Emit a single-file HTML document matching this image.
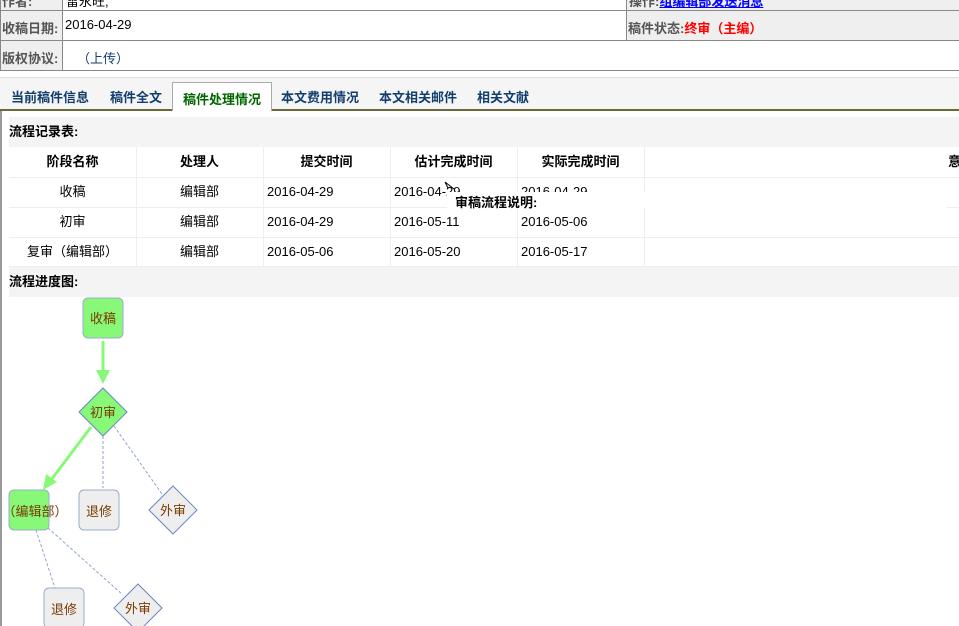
<!DOCTYPE html>
<html><head><meta charset="utf-8"><style>
*{margin:0;padding:0;box-sizing:border-box}
body{width:959px;height:626px;overflow:hidden;background:#fff;font-family:"Liberation Sans","Noto Sans CJK SC",sans-serif;font-size:13px;position:relative}
.a{position:absolute}
.lab{background:#efefef;color:#555;font-weight:bold}
.hl{position:absolute;height:1px;background:#888}
.vl{position:absolute;width:1px;background:#888}
.tab{position:absolute;top:87px;color:#123f6e;font-weight:bold;font-size:13px}
.cell{position:absolute;height:30px;line-height:30px;font-size:13px;color:#000}
.c{text-align:center}
</style></head><body>
<div class="a lab" style="left:0;top:0;width:62px;height:70px"></div>
<div class="a lab" style="left:626px;top:0;width:333px;height:40px"></div>
<div class="hl" style="left:0;top:10px;width:959px"></div>
<div class="hl" style="left:0;top:40px;width:959px"></div>
<div class="hl" style="left:0;top:70px;width:959px"></div>
<div class="vl" style="left:62px;top:0;height:70px"></div>
<div class="vl" style="left:626px;top:0;height:40px"></div>
<div class="vl" style="left:0;top:0;height:70px"></div>
<div class="a" style="left:2px;top:-9px;color:#555;font-weight:bold">作者:</div>
<div class="a" style="left:66px;top:-9px">雷永旺,</div>
<div class="a" style="left:629px;top:-9px;color:#555;font-weight:bold">操作:<span style="color:#00f;text-decoration:underline">组编辑部发送消息</span></div>
<div class="a" style="left:2px;top:18px;color:#555;font-weight:bold">收稿日期:</div>
<div class="a" style="left:65px;top:17px">2016-04-29</div>
<div class="a" style="left:628px;top:18px;color:#555;font-weight:bold">稿件状态:<span style="color:#f00">终审（主编）</span></div>
<div class="a" style="left:2px;top:48px;color:#555;font-weight:bold">版权协议:</div>
<div class="a" style="left:77px;top:48px;color:#123f6e">（上传）</div>
<div class="a" style="left:0;top:77px;width:959px;height:33px;background:#f5f5f5;border-top:1px solid #ddd"></div>
<div class="a" style="left:0;top:109px;width:959px;height:2px;background:#6b6b3a"></div>
<div class="a" style="left:172px;top:82px;width:100px;height:29px;background:#fff;border:1px solid #aaa;border-bottom:none"></div>
<div class="tab" style="left:11px">当前稿件信息</div>
<div class="tab" style="left:110px">稿件全文</div>
<div class="tab" style="left:183px;top:89px;color:#006600">稿件处理情况</div>
<div class="tab" style="left:281px">本文费用情况</div>
<div class="tab" style="left:379px">本文相关邮件</div>
<div class="tab" style="left:477px">相关文献</div>
<div class="vl" style="left:0;top:111px;height:515px;width:2px;background:#999"></div>
<div class="a" style="left:9px;top:117px;width:950px;height:30px;background:#f4f4f4;font-weight:bold;line-height:30px">流程记录表:</div>
<div class="a" style="left:9px;top:147px;width:950px;height:120px;border-bottom:1px solid #eee"></div>
<div class="hl" style="left:9px;top:177px;width:950px;background:#eee"></div>
<div class="hl" style="left:9px;top:207px;width:950px;background:#eee"></div>
<div class="hl" style="left:9px;top:237px;width:950px;background:#eee"></div>
<div class="vl" style="left:136px;top:147px;height:120px;background:#eee"></div>
<div class="vl" style="left:263px;top:147px;height:120px;background:#eee"></div>
<div class="vl" style="left:390px;top:147px;height:120px;background:#eee"></div>
<div class="vl" style="left:517px;top:147px;height:120px;background:#eee"></div>
<div class="vl" style="left:644px;top:147px;height:120px;background:#eee"></div>
<div class="cell c" style="left:9px;top:147px;width:127px;font-weight:bold">阶段名称</div>
<div class="cell c" style="left:136px;top:147px;width:127px;font-weight:bold">处理人</div>
<div class="cell c" style="left:263px;top:147px;width:127px;font-weight:bold">提交时间</div>
<div class="cell c" style="left:390px;top:147px;width:127px;font-weight:bold">估计完成时间</div>
<div class="cell c" style="left:517px;top:147px;width:127px;font-weight:bold">实际完成时间</div>
<div class="cell" style="left:948px;top:147px;font-weight:bold">意</div>
<div class="cell c" style="left:9px;top:177px;width:127px">收稿</div>
<div class="cell c" style="left:136px;top:177px;width:127px">编辑部</div>
<div class="cell" style="left:267px;top:177px">2016-04-29</div>
<div class="cell" style="left:394px;top:177px">2016-04-29</div>
<div class="cell" style="left:521px;top:177px">2016-04-29</div>
<div class="cell c" style="left:9px;top:207px;width:127px">初审</div>
<div class="cell c" style="left:136px;top:207px;width:127px">编辑部</div>
<div class="cell" style="left:267px;top:207px">2016-04-29</div>
<div class="cell" style="left:394px;top:207px">2016-05-11</div>
<div class="cell" style="left:521px;top:207px">2016-05-06</div>
<div class="cell c" style="left:9px;top:237px;width:127px">复审（编辑部）</div>
<div class="cell c" style="left:136px;top:237px;width:127px">编辑部</div>
<div class="cell" style="left:267px;top:237px">2016-05-06</div>
<div class="cell" style="left:394px;top:237px">2016-05-20</div>
<div class="cell" style="left:521px;top:237px">2016-05-17</div>
<div class="a" style="left:447px;top:192px;width:500px;height:16px;background:#fff"></div>
<div class="a" style="left:455px;top:192px;font-weight:bold;font-size:13px">审稿流程说明:</div>
<svg class="a" style="left:440px;top:180px" width="20" height="15"><path d="M5 2 L8 8 M5 2 L14 9" stroke="#000" fill="none"/></svg>
<div class="a" style="left:9px;top:267px;width:950px;height:30px;background:#f4f4f4;font-weight:bold;line-height:30px">流程进度图:</div>
<svg class="a" style="left:0;top:0" width="959" height="626">
<g font-family="Liberation Sans,Noto Sans CJK SC,sans-serif" font-size="13" fill="#7a3a00" text-anchor="middle">
<line x1="103" y1="341" x2="103" y2="372" stroke="#88f878" stroke-width="3"/>
<polygon points="96,370 110,370 103,384" fill="#88f878"/>
<line x1="91" y1="427" x2="51" y2="480" stroke="#88f878" stroke-width="3"/>
<polygon points="43,490 46,474 57,482" fill="#88f878"/>
<g stroke="#8fa3cc" stroke-dasharray="3,2" fill="none">
<line x1="103" y1="436" x2="103" y2="488"/>
<line x1="114" y1="426" x2="162" y2="494"/>
<line x1="36" y1="530" x2="55" y2="588"/>
<line x1="48" y1="528" x2="123" y2="595"/>
</g>
<rect x="83" y="298" width="40" height="40" rx="5" fill="#88f878" stroke="#9aaccc"/>
<text x="103" y="323">收稿</text>
<polygon points="103,388 127,412 103,436 79,412" fill="#88f878" stroke="#6b85c7"/>
<text x="103" y="417">初审</text>
<rect x="9" y="490" width="40" height="40" rx="5" fill="#88f878" stroke="#9aaccc"/>
<text x="35" y="516">（编辑部）</text>
<rect x="79" y="490" width="40" height="40" rx="5" fill="#eee" stroke="#9aaccc"/>
<text x="99" y="516">退修</text>
<polygon points="173,486 197,510 173,534 149,510" fill="#eee" stroke="#6b85c7"/>
<text x="173" y="515">外审</text>
<rect x="44" y="588" width="40" height="40" rx="5" fill="#eee" stroke="#9aaccc"/>
<text x="64" y="614">退修</text>
<polygon points="138,584 162,608 138,632 114,608" fill="#eee" stroke="#6b85c7"/>
<text x="138" y="613">外审</text>
</g></svg>
</body></html>
